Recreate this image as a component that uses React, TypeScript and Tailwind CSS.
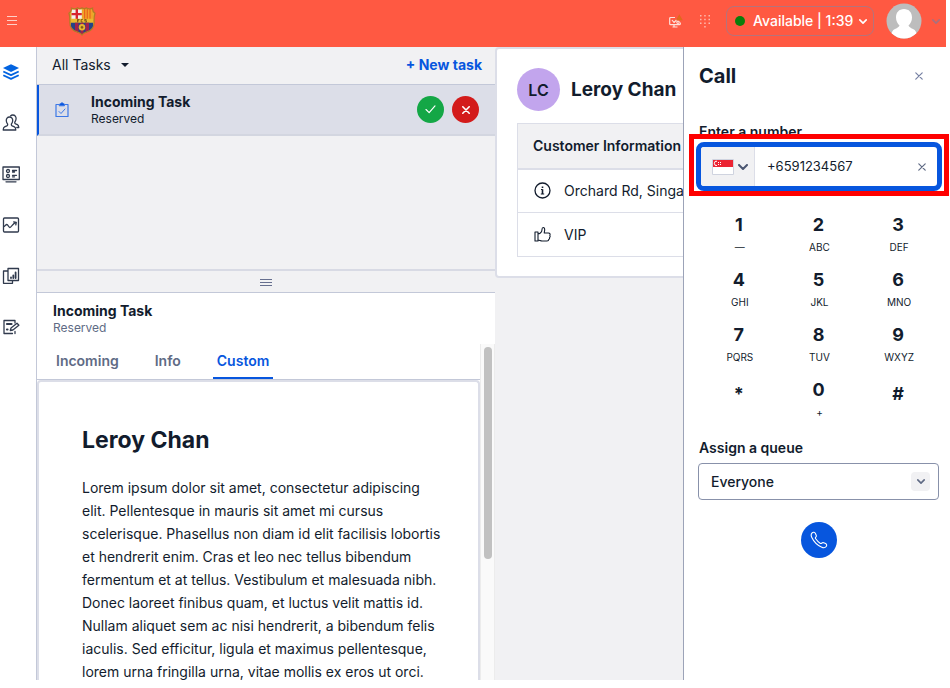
import React from "react";

type IconProps = { className?: string };

function Crest() {
  return (
    <svg viewBox="0 0 28 29" className="h-[29px] w-7" aria-label="FC Barcelona">
      <defs>
        <clipPath id="shield">
          <path d="M3.500 1.200C6 2.200 8 2 9.500.900c1.500.9 3 .9 4.500 0 1.500.9 3 .9 4.500 0C20 2 22 2.200 24.500 1.200c-.2 2.300.8 3.800 2.500 5-1 2.800-1 5.800-.9 9.300.1 5.500-3 8.500-7.600 9.700-2.200.5-3.500 1.300-4.500 2.800-1-1.500-2.300-2.300-4.500-2.800-4.600-1.200-7.700-4.200-7.600-9.700.1-3.500.1-6.500-.9-9.300 1.700-1.200 2.700-2.700 2.500-5Z" />
        </clipPath>
      </defs>
      <g clipPath="url(#shield)">
        <path fill="#e0b02c" d="M0 0h28v29H0z" />
        <path fill="#f4f0ee" d="M3.500 2.500h10.300v9.500H3.500z" />
        <path fill="#d8232f" d="M7.600 2h2.400v10H7.600zM3.500 5.900h10.300v2.400H3.500z" />
        <path fill="#f3a02a" d="M14.500 2.500h10.300v9.500H14.500z" />
        <path fill="#e8641c" d="M16 2h1.200v10H16zM18.700 2h1.200v10h-1.200zM21.400 2h1.200v10h-1.200z" />
        <path fill="#ebb92f" d="M2 11.800h24v4H2z" />
        <path fill="#244488" d="M3 15.800h22V29H3z" />
        <path fill="#a1234c" d="M7 15.800h3.500V29H7zM12.500 15.800h3V29h-3zM17.500 15.800h3.500V29h-3.500z" />
        <circle cx="14" cy="20.300" r="3.200" fill="#e7b52f" />
        <path fill="#7d5a1c" d="m14 18.800 1.500 1.100-.6 1.700h-1.800l-.6-1.700Z" />
      </g>
      <path d="M9.500 12.300v3M9.500 12.500h2M9.500 13.800h1.500M14.800 12.500h-1.600v2.500h1.600M18.500 12.500h-1.800v1.200h1.800V15h-1.800" fill="none" stroke="#6b4a18" strokeWidth=".8" />
      <path fill="none" stroke="#b57a26" strokeWidth="1.300" d="M3.500 1.200C6 2.200 8 2 9.500.900c1.500.9 3 .9 4.500 0 1.500.9 3 .9 4.500 0C20 2 22 2.200 24.500 1.200c-.2 2.300.8 3.800 2.500 5-1 2.800-1 5.800-.9 9.300.1 5.500-3 8.500-7.600 9.700-2.200.5-3.500 1.300-4.500 2.800-1-1.500-2.300-2.300-4.500-2.800-4.600-1.200-7.700-4.200-7.600-9.700.1-3.500.1-6.500-.9-9.300 1.700-1.200 2.700-2.700 2.500-5Z" />
    </svg>
  );
}

function Chevron({ className }: IconProps) {
  return (
    <svg viewBox="0 0 10 6" className={className} fill="none" stroke="currentColor" strokeWidth="2" strokeLinecap="round" strokeLinejoin="round">
      <path d="m1 1 4 4 4-4" />
    </svg>
  );
}

function Cross({ className }: IconProps) {
  return (
    <svg viewBox="0 0 10 10" className={className} fill="none" stroke="currentColor" strokeWidth="1.500" strokeLinecap="round">
      <path d="m1 1 8 8M9 1 1 9" />
    </svg>
  );
}

function StackIcon() {
  return (
    <svg viewBox="0 0 18 18" className="size-[18px] text-[#0263e0]" fill="currentColor">
      <path d="m9 1.300 8 3.800-8 3.900-8-3.900Z" />
      <path fill="none" stroke="currentColor" strokeWidth="1.800" strokeLinejoin="round" d="m1.300 8.500 7.700 3.600 7.700-3.600M1.300 12.300 9 15.900l7.700-3.600" />
    </svg>
  );
}

function lineIcon(paths: React.ReactNode) {
  return (
    <svg viewBox="0 0 18 18" className="size-[18px]" fill="none" stroke="currentColor" strokeWidth="1.300" strokeLinecap="round" strokeLinejoin="round">
      {paths}
    </svg>
  );
}

const navItems = [
  { label: "Agent desktop", icon: <StackIcon /> },
  {
    label: "Teams",
    icon: lineIcon(
      <>
        <path d="M7.500 3c2.200 0 3.300 1.700 3.200 3.700-.1 1.600-.7 2.500-1.200 3.200-.4.700-.1 1.500.7 1.900l2.200 1c.9.400 1.300 1.200 1.400 3.200H1.200c.1-2 .5-2.800 1.400-3.200l2.200-1c.8-.4 1.100-1.200.7-1.900-.5-.7-1.100-1.600-1.200-3.200C4.200 4.700 5.300 3 7.500 3Z" />
        <path d="M8.500 1.900c.6-.6 1.400-.9 2.300-.9 2.200 0 3.400 1.700 3.300 3.800-.1 1.500-.7 2.500-1.200 3.200-.4.700-.1 1.500.7 1.900l1.800.8c.9.400 1.300 1.100 1.400 2.800h-2" />
      </>,
    ),
  },
  {
    label: "Queues",
    icon: lineIcon(
      <>
        <path d="M1 2h16.300v12.500H1zM4 16.800h10M10.500 5.500h4M10.500 7h2M10.500 10.300h4M10.500 11.800h2" />
        <circle cx="6" cy="6" r="1.500" />
        <circle cx="6" cy="11" r="1.500" />
      </>,
    ),
  },
  {
    label: "Insights",
    icon: lineIcon(
      <>
        <rect x="1.500" y="2" width="15" height="14" rx="1" />
        <path d="M1.800 10.500c1.500 0 1.700-2 3-2 1.400 0 1.700 3 3 3 1.600 0 3.600-5 6-5M11.700 5.800l2.600.5-.5 2.600" />
      </>,
    ),
  },
  {
    label: "Dashboards",
    icon: lineIcon(
      <>
        <path d="M6 1.500h10.500v12H6zM6 4H1.500v12.300h9v-2.500" />
        <path strokeWidth="1.800" d="M9 10.500v.5M11.300 8.500V11M13.600 5.500V11" />
      </>,
    ),
  },
  {
    label: "Editor",
    icon: lineIcon(
      <>
        <path d="M13 5V2.500H2v13h8.500M13 15.500v-2" />
        <path strokeWidth="2.200" d="M5 6h4.500M5 11.500h.5" />
        <path d="m8.300 12.500.7-2.500 6-4.800 1.900 2-6 4.800Z" />
      </>,
    ),
  },
];

function Header() {
  return (
    <header className="flex h-[47px] shrink-0 items-center bg-[#ff5942] pb-[5px] pl-[6px] text-white">
      <button aria-label="Toggle menu" className="flex h-6 w-3 items-center">
        <svg viewBox="0 0 12 12" className="size-3" stroke="#ffd0c8" strokeWidth="1.200">
          <path d="M1 1.500h10M1 5.500h10M1 9.500h10" />
        </svg>
      </button>
      <div className="ml-[50px] mr-auto">
        <Crest />
      </div>
      <svg viewBox="0 0 15 15" className="mr-4 size-[15px]" fill="none" stroke="#ffe0da" strokeWidth="1.200" strokeLinejoin="round">
        <path d="M7 3.500H2.700c-.6 0-1 .4-1 1v5.200c0 .6.4 1 1 1h8.600c.6 0 1-.4 1-1V8.500M4.500 13h5M6 10.700V13M4 6l2 2.500 3-3" />
        <circle cx="10" cy="8.300" r="1.200" />
        <path fill="#e0691c" stroke="none" d="m11.300.3 3.500 6H7.800Z" />
      </svg>
      <button aria-label="Dialpad" className="mr-[15px]">
        <svg viewBox="0 0 12 15" className="h-[15px] w-3" fill="#ffb9ad">
          <path d="M1 1h1.500v1.500H1zM5.200 1h1.500v1.500H5.200zM9.500 1H11v1.500H9.500zM1 4.700h1.500v1.500H1zM5.200 4.700h1.500v1.500H5.200zM9.500 4.700H11v1.500H9.500zM1 8.400h1.500v1.500H1zM5.200 8.400h1.500v1.500H5.200zM9.500 8.400H11v1.500H9.500zM5.200 12.100h1.500v1.500H5.200z" />
        </svg>
      </button>
      <button className="flex h-[30px] w-[148px] items-center rounded-lg border border-[#b5737c] pl-2 text-sm font-medium whitespace-nowrap">
        <span className="mr-2 size-[10px] rounded-full bg-[#0b7d0b]" />
        Available | 1:39
        <Chevron className="ml-[6px] h-[5px] w-2" />
      </button>
      <button aria-label="Account" className="ml-3 mr-[6px] flex items-center gap-[10px]">
        <svg viewBox="0 0 36 36" className="size-9">
          <clipPath id="face">
            <circle cx="18" cy="18" r="17.500" />
          </clipPath>
          <g clipPath="url(#face)">
            <path fill="#bdbdbd" d="M0 0h36v36H0z" />
            <path fill="#fff" d="M18 6c5 0 8 3.500 8 8.500 0 3.500-1.500 6-3.500 8 .5 1.500 2 2.300 4.500 3.500 2.500 1 4 3.500 4.500 10h-27c.5-6.500 2-9 4.500-10 2.500-1.200 4-2 4.500-3.500-2-2-3.500-4.500-3.500-8C10 9.500 13 6 18 6Z" />
          </g>
        </svg>
        <Chevron className="h-[5px] w-2 text-[#a8707f]" />
      </button>
    </header>
  );
}

function TaskColumn() {
  return (
    <section className="flex w-[459px] shrink-0 flex-col border-l border-[#c3c8d8] bg-[#f1f1f3]">
      <div className="flex h-[222px] shrink-0 flex-col">
        <div className="flex h-[38px] items-center justify-between border-b border-[#c3c8d8] pb-px pl-[15px] pr-[13px] text-sm">
          <button className="flex items-center gap-[10px]">
            All Tasks
            <span className="border-x-4 border-t-4 border-x-transparent border-t-[#121c2d]" />
          </button>
          <button className="font-bold text-[#0756de]">+ New task</button>
        </div>
        <div className="flex h-[51px] items-center border-b-2 border-l-2 border-b-[#d3d6e0] border-l-[#0756de] bg-[#dcdee8] pl-4 pr-4">
          <svg viewBox="0 0 14 16" className="mr-[22px] h-4 w-[14px]" fill="none" stroke="#3d78e6" strokeLinejoin="round" strokeLinecap="round">
            <path strokeWidth="1.200" d="M4 2.500H1v12h12v-12h-3" />
            <path fill="#0756de" d="M4.500 2.500c0-.5.500-1 1.200-1C6 .5 8 .5 8.300 1.500c.7 0 1.200.5 1.200 1v1.300h-5Z" />
            <path d="m4 9.500 2 2 4-4.500" />
          </svg>
          <div className="mr-auto">
            <p className="text-sm leading-[18px] font-bold">Incoming Task</p>
            <p className="text-xs leading-4">Reserved</p>
          </div>
          <button aria-label="Accept" className="mr-2 flex size-[27px] items-center justify-center rounded-full bg-[#14a746] text-white">
            <svg viewBox="0 0 12 10" className="h-[9px] w-[11px]" fill="none" stroke="currentColor" strokeWidth="1.300" strokeLinecap="round" strokeLinejoin="round">
              <path d="m1 5 3.500 3.500L11 1" />
            </svg>
          </button>
          <button aria-label="Decline" className="flex size-[27px] items-center justify-center rounded-full bg-[#d31b1b] text-white">
            <Cross className="size-2 stroke-2" />
          </button>
        </div>
      </div>
      <div className="flex h-6 shrink-0 items-center justify-center border-y border-t-2 border-b-[#c3c8d8] border-t-[#d8dae4]">
        <svg viewBox="0 0 12 8" className="h-2 w-3" stroke="#666f8f">
          <path d="M0 1.500h12M0 4.500h12M0 7.500h12" />
        </svg>
      </div>
      <div className="flex min-h-0 flex-1 flex-col bg-white">
        <div className="h-[51px] shrink-0 pl-4 pt-[9px]">
          <h2 className="text-sm leading-[18px] font-bold">Incoming Task</h2>
          <p className="text-xs leading-4 text-[#606b85]">Reserved</p>
        </div>
        <div className="flex min-h-0 flex-1">
          <div className="flex min-w-0 flex-1 flex-col overflow-hidden">
            <div role="tablist" className="flex h-9 shrink-0 border-b border-[#c3c8d8] pl-[15px] text-sm font-semibold text-[#606b85]">
              <button role="tab" className="mr-7 px-1 pb-px">Incoming</button>
              <button role="tab" className="mr-7 px-1 pb-px">Info</button>
              <button role="tab" aria-selected="true" className="border-b-2 border-[#0756de] px-1 pt-px text-[#0756de]">Custom</button>
            </div>
            <article className="min-h-0 flex-1 overflow-hidden rounded-t border-2 border-b-0 border-[#dcdee8] pl-[43px] pr-9 pt-[42px]">
              <h1 className="text-[23px] leading-8 font-bold">Leroy Chan</h1>
              <p className="mt-5 text-sm leading-[23px]">
                Lorem ipsum dolor sit amet, consectetur adipiscing elit. Pellentesque in mauris sit amet mi cursus
                scelerisque. Phasellus non diam id elit facilisis lobortis et hendrerit enim. Cras et leo nec tellus
                bibendum fermentum et at tellus. Vestibulum et malesuada nibh. Donec laoreet finibus quam, et luctus
                velit mattis id. Nullam aliquet sem ac nisi hendrerit, a bibendum felis iaculis. Sed efficitur, ligula
                et maximus pellentesque, lorem urna fringilla urna, vitae mollis ex eros ut orci.
              </p>
            </article>
          </div>
          <div className="w-[15px] shrink-0 border-x border-[#ececec] bg-[#fafafa] px-[3px] pt-[3px]">
            <div className="h-[212px] w-2 rounded-full bg-[#c1c1c1]" />
          </div>
        </div>
      </div>
    </section>
  );
}

function CustomerPane() {
  return (
    <main className="min-w-0 flex-1 overflow-hidden bg-[#f1f1f3]">
      <div className="w-[420px] rounded border-2 border-[#dcdee8] bg-white px-5 pb-[19px] pt-[19px]">
        <div className="flex items-center gap-[11px]">
          <span className="flex size-[43px] items-center justify-center rounded-full bg-[#c2a5ed] font-semibold">LC</span>
          <h2 className="text-[19px] leading-7 font-bold">Leroy Chan</h2>
        </div>
        <table className="mt-3 w-full border-collapse border border-[#dcdee8] text-left text-sm">
          <thead>
            <tr className="h-[45px] border-b-2 border-[#dcdee8] bg-[#f1f1f3]">
              <th className="pl-[15px] font-semibold">Customer Information</th>
            </tr>
          </thead>
          <tbody>
            <tr className="h-11 border-b border-[#dcdee8]">
              <td className="pl-4">
                <span className="flex items-center gap-[13px]">
                  <svg viewBox="0 0 17 17" className="size-[17px]" fill="none" stroke="currentColor" strokeWidth="1.300">
                    <circle cx="8.500" cy="8.500" r="7.500" />
                    <path strokeWidth="1.600" d="M8.500 7.300V12M8.500 4.500v1.400" />
                    <path strokeWidth="1" d="M7 7.500h1.500M6.800 12h3.400" />
                  </svg>
                  Orchard Rd, Singapore
                </span>
              </td>
            </tr>
            <tr className="h-11">
              <td className="pl-4">
                <span className="flex items-center gap-[13px]">
                  <svg viewBox="0 0 17 17" className="size-[17px]" fill="none" stroke="currentColor" strokeWidth="1.100" strokeLinejoin="round" strokeLinecap="round">
                    <path d="M1 6h3v9H1zM4 8c2.500-.5 4-2 4-4.500 0-1.400.4-2 1.200-2 1.200 0 1.800 1.500 1.300 3.700L10.200 7h4.300c1.500 0 1.900 1.300 1.300 2.500.5.800.3 1.700-.3 2.200.2.800-.1 1.500-.8 1.900 0 .9-.6 1.400-1.700 1.400H8c-1.500 0-2.500-1-4-1" />
                  </svg>
                  VIP
                </span>
              </td>
            </tr>
          </tbody>
        </table>
      </div>
    </main>
  );
}

const keys = [
  ["1", "—"],
  ["2", "ABC"],
  ["3", "DEF"],
  ["4", "GHI"],
  ["5", "JKL"],
  ["6", "MNO"],
  ["7", "PQRS"],
  ["8", "TUV"],
  ["9", "WXYZ"],
  ["*", ""],
  ["0", "+"],
  ["#", ""],
];

function CallPanel() {
  return (
    <aside className="flex w-[263px] shrink-0 flex-col border-l border-[#9ca3b8] bg-white">
      <div className="flex items-center justify-between pl-[15px] pr-[23px] pt-[15px]">
        <h2 className="text-xl leading-7 font-bold">Call</h2>
        <button aria-label="Close" className="text-[#7681a3]">
          <Cross className="size-2" />
        </button>
      </div>
      <label htmlFor="number" className="mt-8 pl-[15px] text-sm leading-5 font-semibold">
        Enter a number
      </label>
      <div className="relative ml-3 mr-1">
        <div className="flex h-[49px] overflow-hidden rounded-lg border-[5px] border-[#0756de] bg-white">
          <button aria-label="Country: Singapore" className="flex w-[54px] items-center gap-1 border-r border-[#dcdee8] bg-[#f1f1f3] pl-[11px]">
            <svg viewBox="0 0 22 16" className="h-4 w-[22px]">
              <path fill="#fff" stroke="#cfd3df" d="M.5.500h21v15H.5z" />
              <path fill="#ec2433" d="M1 1h20v7H1z" />
              <path fill="none" stroke="#fff" d="M5 2.200a2.200 2.200 0 1 0 0 4.300" />
              <path stroke="#fff" strokeDasharray="1 1" d="M6 3.500h3M6 5.500h3" />
            </svg>
            <Chevron className="h-[6px] w-[10px] text-[#4b5671]" />
          </button>
          <input id="number" type="tel" defaultValue="+6591234567" className="min-w-0 flex-1 pl-3 text-[13px] outline-none" />
          <button aria-label="Clear number" className="px-[11px] text-[#606b85]">
            <Cross className="size-2" />
          </button>
        </div>
        <div className="pointer-events-none absolute -inset-x-[7px] -top-2 -bottom-[5px] border-[5px] border-[#fe0000]" />
      </div>
      <div className="mt-[22px] grid grid-cols-3 pl-[15px] pr-2">
        {keys.map(([digit, letters]) => (
          <button key={digit} className="flex h-[55px] flex-col items-center">
            <span className={letters ? "text-lg leading-6 font-bold" : "pt-1 text-lg leading-6 font-bold"}>{digit}</span>
            <span className="pl-[2px] text-[10px] leading-5">{letters}</span>
          </button>
        ))}
      </div>
      <label htmlFor="queue" className="mt-[5px] pl-[15px] text-sm leading-5 font-semibold">
        Assign a queue
      </label>
      <div className="relative ml-[14px] mr-[7px] mt-[5px]">
        <select id="queue" className="h-[37px] w-full appearance-none rounded border border-[#8891aa] bg-white pl-3 text-sm font-medium">
          <option>Everyone</option>
        </select>
        <span className="pointer-events-none absolute right-[9px] top-[9px] flex size-[19px] items-center justify-center rounded bg-[#f1f1f3] text-[#606b85]">
          <Chevron className="h-[5px] w-2" />
        </span>
      </div>
      <div className="mt-[22px] flex justify-center pl-[15px] pr-2">
        <button aria-label="Call number" className="flex size-9 items-center justify-center rounded-full bg-[#0756de] text-white">
          <svg viewBox="0 0 18 18" className="size-[18px]" fill="none" stroke="currentColor" strokeWidth="1.100" strokeLinejoin="round">
            <path d="M2.300 1.700c1-.8 2.400-.5 3 .6l.9 1.900c.3.900.1 1.500-.5 2-.5.500-.4 1 0 1.600 1.200 1.800 2.600 3.200 4.400 4.400.6.400 1.100.5 1.600 0 .6-.6 1.200-.8 2-.5l1.900.9c1.100.6 1.400 1.900.6 2.900-1 1.300-2.700 1.500-4.400.7C7.500 14.300 3.700 10.500 1.700 6.200.9 4.400 1 2.700 2.300 1.700Z" />
          </svg>
        </button>
      </div>
    </aside>
  );
}

export default function App() {
  return (
    <div className="flex h-screen flex-col overflow-hidden bg-white pr-1 pb-2 font-['Inter',sans-serif] text-[#121c2d]">
      <Header />
      <div className="flex min-h-0 flex-1">
        <nav className="flex w-9 shrink-0 flex-col gap-[33px] pl-[2px] pt-4 text-[#303a4d]">
          {navItems.map((item) => (
            <a key={item.label} href="#" aria-label={item.label}>
              {item.icon}
            </a>
          ))}
        </nav>
        <TaskColumn />
        <CustomerPane />
        <CallPanel />
      </div>
    </div>
  );
}
